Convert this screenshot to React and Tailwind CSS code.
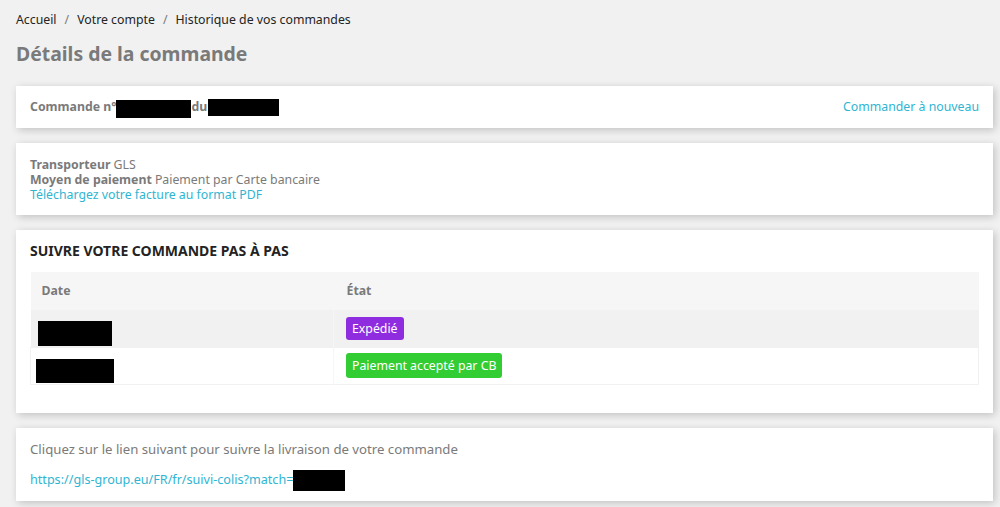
const Redacted = ({ className }) => <span className={`inline-block bg-black align-middle ${className}`} />;

const Card = ({ className = "", children }) => (
  <section className={`bg-white shadow-[2px_2px_8px_0_rgba(0,0,0,0.2)] ${className}`}>{children}</section>
);

export default function App() {
  return (
    <div className="min-h-[507px] bg-[#f1f1f1] pl-4 pr-[7px] pt-[11px] pb-[7px] font-['Noto_Sans',sans-serif] text-[#7a7a7a]">
      {/* breadcrumb */}
      <nav className="flex items-center gap-[8px] text-[12.3px] leading-[18px] text-[#232323]">
        <span>Accueil</span>
        <span className="text-[#7a7a7a]">/</span>
        <span>Votre compte</span>
        <span className="text-[#7a7a7a]">/</span>
        <span>Historique de vos commandes</span>
      </nav>

      <h1 className="mt-[12px] text-[19.4px] font-bold leading-[26px] text-[#7a7a7a]">Détails de la commande</h1>

      <div className="mt-[19px] flex flex-col gap-[15px]">
        {/* order header */}
        <Card className="flex h-[42px] items-center justify-between px-[14px] pt-[1px] text-[12.3px]">
          <div className="flex items-center font-bold">
            <span>Commande n°</span>
            <Redacted className="h-[18px] w-[75px] mt-[2px]" />
            <span>du</span>
            <Redacted className="h-[17px] w-[71px] -mt-[1px] ml-[1px]" />
          </div>
          <a className="text-[#2fb5d2]">Commander à nouveau</a>
        </Card>

        {/* carrier / payment */}
        <Card className="px-[14px] pt-[14px] pb-[13px] text-[12.3px] leading-[15px]">
          <p><strong>Transporteur</strong> GLS</p>
          <p><strong>Moyen de paiement</strong> Paiement par Carte bancaire</p>
          <a className="text-[#2fb5d2]">Téléchargez votre facture au format PDF</a>
        </Card>

        {/* history */}
        <Card className="px-[14px] pt-[11px] pb-[28px]">
          <h3 className="text-[14px] font-bold leading-[19px] text-[#232323]">SUIVRE VOTRE COMMANDE PAS À PAS</h3>
          <table className="mt-[12px] w-full border-collapse text-[12.3px]">
            <thead>
              <tr className="h-[38px] bg-[#f6f6f6] text-left">
                <th className="w-[303px] px-[11px] font-bold">Date</th>
                <th className="px-[13px] font-bold">État</th>
              </tr>
            </thead>
            <tbody>
              <tr className="h-[37px] bg-[#f1f1f1]">
                <td className="border-r border-[#f6f6f6] px-[7px]">
                  <Redacted className="h-[25px] w-[74px] translate-y-[5px]" />
                </td>
                <td className="px-[12px]">
                  <span className="inline-block rounded-[3px] bg-[#8f2ce0] px-[6px] leading-[23px] text-white">Expédié</span>
                </td>
              </tr>
              <tr className="h-[37px] border border-[#f1f1f1] bg-white">
                <td className="border-r border-[#f6f6f6] px-[5px]">
                  <Redacted className="h-[24px] w-[78px] translate-y-[5px]" />
                </td>
                <td className="px-[12px]">
                  <span className="inline-block rounded-[3px] bg-[#32cd32] px-[6px] leading-[25px] text-white">Paiement accepté par CB</span>
                </td>
              </tr>
            </tbody>
          </table>
        </Card>

        {/* tracking */}
        <Card className="px-[14px] pt-[12px] pb-[10px] text-[13.2px]">
          <p className="leading-[19px]">Cliquez sur le lien suivant pour suivre la livraison de votre commande</p>
          <div className="mt-[11px] flex items-center text-[12.6px] text-[#2fb5d2]">
            <a>https://gls-group.eu/FR/fr/suivi-colis?match=</a>
            <Redacted className="h-[21px] w-[52px]" />
          </div>
        </Card>
      </div>
    </div>
  );
}
